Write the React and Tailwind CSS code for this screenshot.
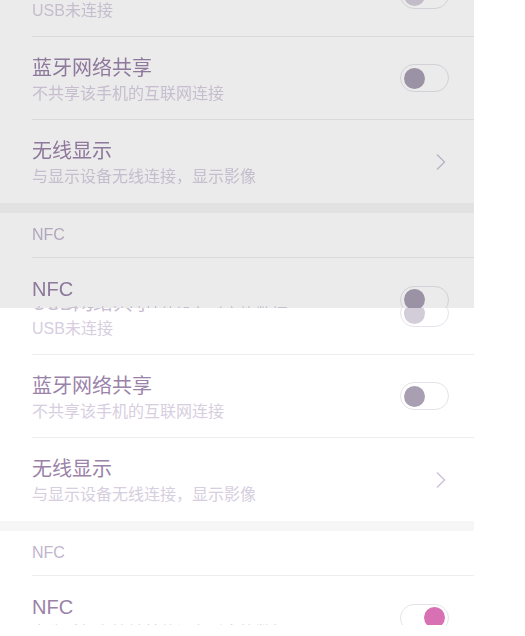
import React from "react";

const font = { fontFamily: '"Liberation Sans", "Noto Sans CJK SC", sans-serif' };

function Toggle({ on, disabled }) {
  return (
    <div
      className={`relative flex h-[28px] w-[49px] items-center rounded-full border border-[#e6e2ea] bg-white px-[3px] ${
        on ? "justify-end" : "justify-start"
      }`}
    >
      <div
        className={`h-[21px] w-[21px] rounded-full ${
          on ? "bg-[#d771b4]" : disabled ? "bg-[#d3ccd9]" : "bg-[#a99fb3]"
        }`}
      />
    </div>
  );
}

function Chevron() {
  return (
    <svg width="12" height="18" viewBox="0 0 12 18" className="mr-[2px]">
      <path d="M2 1.5 L9.5 9 L2 16.5" fill="none" stroke="#cbc2d6" strokeWidth="1.4" />
    </svg>
  );
}

function Row({ title, sub, right, last, disabled }) {
  return (
    <div className="pl-[32px]">
      <div
        className={`flex h-[83px] items-center justify-between pr-[25px] ${
          last ? "" : "border-b border-[#ededed]"
        }`}
      >
        <div className="pt-[3px]">
          <div
            className={`text-[20px] leading-[20px] ${
              disabled ? "text-[#c9bdd2]" : "text-[#9a82a9]"
            }`}
          >
            {title}
          </div>
          <div className="mt-[8px] text-[16px] leading-[16px] text-[#d7cee0]">{sub}</div>
        </div>
        {right}
      </div>
    </div>
  );
}

function SettingsList({ nfcOn }) {
  return (
    <div className="w-[474px] bg-white" style={font}>
      <Row title="USB网络共享" sub="USB未连接" right={<Toggle disabled />} disabled />
      <Row title="蓝牙网络共享" sub="不共享该手机的互联网连接" right={<Toggle />} />
      <Row title="无线显示" sub="与显示设备无线连接，显示影像" right={<Chevron />} last />
      <div className="h-[10px] bg-[#f6f6f6]" />
      <div className="pl-[32px]">
        <div className="flex h-[45px] items-center border-b border-[#ededed] text-[16px] text-[#c2b5cd]">
          NFC
        </div>
      </div>
      <Row
        title="NFC"
        sub="允许手机在接触其他设备时交换数据"
        right={<Toggle on={nfcOn} />}
        last
      />
      <div className="h-[60px]" />
    </div>
  );
}

export default function App() {
  return (
    <div className="h-[636px] w-[525px] overflow-hidden bg-white">
      <div className="h-[308px] overflow-hidden">
        <div className="mt-[-46px] w-[474px] brightness-[0.92]">
          <SettingsList nfcOn={false} />
        </div>
      </div>
      <div className="h-[317px] overflow-hidden">
        <div className="mt-[-36px]">
          <SettingsList nfcOn />
        </div>
      </div>
    </div>
  );
}
